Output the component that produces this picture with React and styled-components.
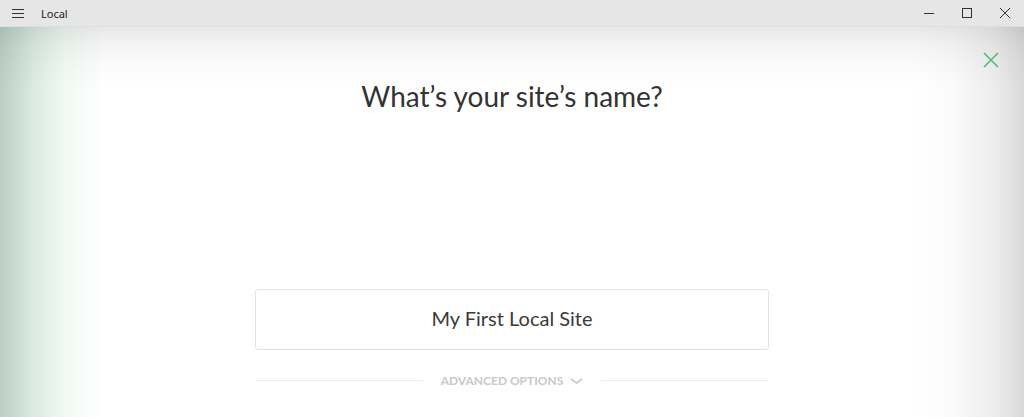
import React from "react";
import styled, { createGlobalStyle } from "styled-components";

const GlobalStyle = createGlobalStyle`
  html, body {
    margin: 0;
    padding: 0;
    height: 100%;
    background: #fff;
    overflow: hidden;
  }
  #root {
    height: 100%;
  }
`;

const Window = styled.div`
  display: flex;
  flex-direction: column;
  width: 1024px;
  height: 417px;
`;

const TitleBar = styled.div`
  display: flex;
  align-items: center;
  height: 26px;
  flex-shrink: 0;
  background: #e6e6e6;
  border-bottom: 1px solid #dedede;
  font-family: "Noto Sans", "Liberation Sans", sans-serif;
`;

const MenuButton = styled.div`
  width: 36px;
  display: flex;
  justify-content: center;
`;

const AppName = styled.span`
  font-size: 11px;
  color: #222;
  margin-left: 5px;
`;

const Controls = styled.div`
  margin-left: auto;
  display: flex;
  height: 100%;
`;

const Control = styled.div`
  width: 38px;
  display: flex;
  align-items: center;
  justify-content: center;
  color: #333;
`;

const Main = styled.div`
  position: relative;
  flex: 1;
  display: flex;
  flex-direction: column;
  align-items: center;
  background:
    linear-gradient(to bottom, rgba(0, 0, 0, 0.09), rgba(0, 0, 0, 0.04) 20px, rgba(0, 0, 0, 0.015) 40px, rgba(0, 0, 0, 0) 60px),
    linear-gradient(to right, rgba(150, 180, 165, 0.65), rgba(175, 212, 190, 0.45) 35px, rgba(200, 235, 212, 0.25) 65px, rgba(255, 255, 255, 0) 105px),
    linear-gradient(to left, rgba(0, 0, 0, 0.15), rgba(0, 0, 0, 0.07) 30px, rgba(0, 0, 0, 0.02) 70px, rgba(0, 0, 0, 0) 110px),
    #fff;
  font-family: Lato, "Open Sans", sans-serif;
`;

const CloseButton = styled.button`
  position: absolute;
  top: 25px;
  right: 24px;
  width: 18px;
  height: 18px;
  padding: 0;
  border: none;
  background: none;
  cursor: pointer;
`;

const Heading = styled.h1`
  margin: 52px 0 0;
  font-size: 28px;
  font-weight: 400;
  color: #333;
  line-height: 34px;
`;

const SiteInput = styled.input`
  margin-top: 176px;
  width: 514px;
  height: 61px;
  box-sizing: border-box;
  padding: 0 0 3px;
  border: 1px solid #e3e3e3;
  border-radius: 3px;
  background: #fff;
  text-align: center;
  font-family: Lato, "Open Sans", sans-serif;
  font-size: 20px;
  color: #3a3a3a;
  outline: none;
`;

const Divider = styled.div`
  margin-top: 23px;
  width: 512px;
  display: flex;
  align-items: center;
  gap: 18px;
`;

const Line = styled.div`
  flex: 1;
  height: 1px;
  background: #ebebeb;
`;

const AdvancedToggle = styled.div`
  display: flex;
  align-items: center;
  gap: 7px;
  font-size: 12px;
  font-weight: 700;
  color: #c8c8c8;
`;

export default function App() {
  return (
    <>
      <GlobalStyle />
      <Window>
        <TitleBar>
          <MenuButton>
            <svg width="12" height="9" viewBox="0 0 12 9">
              <path d="M0 0.5h12M0 4.5h12M0 8.5h12" stroke="#333" strokeWidth="1" />
            </svg>
          </MenuButton>
          <AppName>Local</AppName>
          <Controls>
            <Control>
              <svg width="10" height="10" viewBox="0 0 10 10">
                <path d="M0 5.5h10" stroke="#333" strokeWidth="1" />
              </svg>
            </Control>
            <Control>
              <svg width="10" height="10" viewBox="0 0 10 10">
                <rect x="0.5" y="0.5" width="9" height="9" fill="none" stroke="#333" strokeWidth="1" />
              </svg>
            </Control>
            <Control>
              <svg width="10" height="10" viewBox="0 0 10 10">
                <path d="M0 0L10 10M10 0L0 10" stroke="#333" strokeWidth="1" />
              </svg>
            </Control>
          </Controls>
        </TitleBar>
        <Main>
          <CloseButton aria-label="Close">
            <svg width="16" height="16" viewBox="0 0 16 16">
              <path d="M1 1L15 15M15 1L1 15" stroke="#51bb7b" strokeWidth="1.6" />
            </svg>
          </CloseButton>
          <Heading>What’s your site’s name?</Heading>
          <SiteInput defaultValue="My First Local Site" />
          <Divider>
            <Line />
            <AdvancedToggle>
              ADVANCED OPTIONS
              <svg width="13" height="6" viewBox="0 0 13 6">
                <path d="M1 1l5.5 4 5.5-4" fill="none" stroke="#c8c8c8" strokeWidth="1.6" />
              </svg>
            </AdvancedToggle>
            <Line />
          </Divider>
        </Main>
      </Window>
    </>
  );
}
